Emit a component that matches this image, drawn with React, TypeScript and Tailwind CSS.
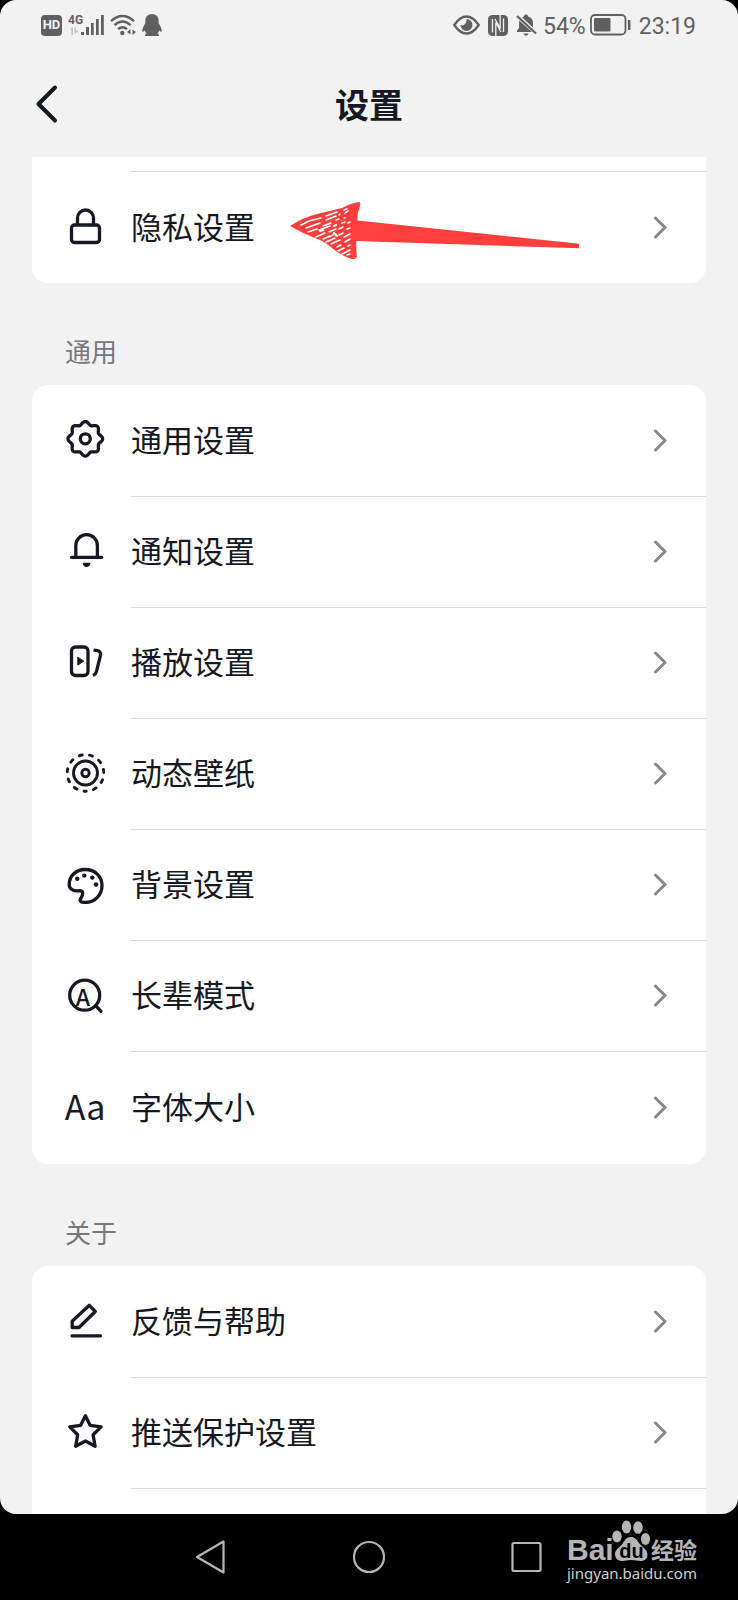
import React from 'react';

type IconProps = { children: React.ReactNode };

type Item = { label: string; icon: React.ReactNode; marked?: boolean };

// eight soft teeth around a circle
const gearPath = (() => {
  const points: string[] = [];
  for (let i = 0; i < 160; i++) {
    const angle = (i / 160) * Math.PI * 2;
    const radius = 15.8 + 1.5 * Math.cos(angle * 8);
    points.push(`${(20.3 + radius * Math.cos(angle)).toFixed(2)} ${(18.8 + radius * Math.sin(angle)).toFixed(2)}`);
  }
  return `M${points.join('L')}Z`;
})();

const Icon = ({ children }: IconProps) => (
  <svg
    viewBox="0 0 40 40"
    className="w-10 h-10"
    fill="none"
    stroke="currentColor"
    strokeWidth="3.3"
    strokeLinecap="round"
    strokeLinejoin="round"
    aria-hidden="true"
  >
    {children}
  </svg>
);

const LockIcon = () => (
  <Icon>
    <rect x="6.5" y="19" width="28" height="17.5" rx="3" />
    <path d="M12.5 18.5V12a8 8 0 0 1 16 0v6.5" />
  </Icon>
);

const GearIcon = () => (
  <Icon>
    <path d={gearPath} />
    <circle cx="20.3" cy="18.8" r="5" />
  </Icon>
);

const BellIcon = () => (
  <Icon>
    <path d="M6.5 26.3h30.3M10.8 26V14.5a10.8 10.8 0 0 1 21.6 0V26" />
    <path d="M17.7 31.8h7.8c0 2.6-1.7 4.2-3.9 4.2s-3.9-1.6-3.9-4.2z" fill="currentColor" stroke="none" />
  </Icon>
);

const PlayIcon = () => (
  <Icon>
    <rect x="6.5" y="5" width="16.5" height="28.5" rx="4" />
    <path d="M12.8 15.5v7.6l5.6-3.8z" fill="currentColor" strokeWidth="1" />
    <path d="M28.5 8l3.7.7c2.7.5 3.9 2.3 3.2 5L31.5 29.3c-.6 2.3-1.6 3.5-3.5 4.3" strokeLinecap="butt" />
  </Icon>
);

const WallpaperIcon = () => (
  <Icon>
    <g strokeWidth="2.9">
      <circle cx="20.5" cy="20" r="18.3" strokeDasharray="3 7.45" strokeDashoffset="1.5" transform="rotate(90 20.5 20)" />
      <circle cx="20.5" cy="20" r="12" />
      <circle cx="20.5" cy="20" r="3.7" />
    </g>
  </Icon>
);

const PaletteIcon = () => (
  <Icon>
    <path d="M4.2 20.5C4.2 12 11 5.5 20 5.5c10 0 17 7 17 16s-7 17-16.5 17c-5.5 0-6.3-2-4.500-4.500 2.500-4 2.500-7-1.500-7.300C8.500 27.500 4.200 25 4.200 20.500z" />
    <g fill="currentColor" stroke="none">
      <circle cx="12.3" cy="14.8" r="2.2" />
      <circle cx="19.3" cy="11.6" r="2.2" />
      <circle cx="27.3" cy="13.6" r="2.2" />
      <circle cx="31" cy="20.5" r="2.2" />
    </g>
  </Icon>
);

const ElderIcon = () => (
  <Icon>
    <circle cx="19.7" cy="20.2" r="15" />
    <path d="M31 31l5 5.3" />
    <text
      x="17.9"
      y="30.5"
      textAnchor="middle"
      fill="currentColor"
      stroke="none"
      className="text-[23px] font-medium font-['Noto_Sans_CJK_SC',sans-serif]"
    >
      A
    </text>
  </Icon>
);

const PencilIcon = () => (
  <Icon>
    <path d="M24.3 4.3l6 6.2L14 26.5H7.2v-6.3zM7 34.8h28.5" />
  </Icon>
);

const StarIcon = () => (
  <Icon>
    <path d="M20.4 3.8l4.7 9.5 11 1.6-8 7.8 2 11.6-9.7-5.3-9.7 5.3 2-11.6-8-7.800 11-1.600z" />
  </Icon>
);

const general: Item[] = [
  { label: '通用设置', icon: <GearIcon /> },
  { label: '通知设置', icon: <BellIcon /> },
  { label: '播放设置', icon: <PlayIcon /> },
  { label: '动态壁纸', icon: <WallpaperIcon /> },
  { label: '背景设置', icon: <PaletteIcon /> },
  { label: '长辈模式', icon: <ElderIcon /> },
  { label: '字体大小', icon: <span className="text-[34px] leading-10">Aa</span> },
];

const about: Item[] = [
  { label: '反馈与帮助', icon: <PencilIcon /> },
  { label: '推送保护设置', icon: <StarIcon /> },
];

const Arrow = () => (
  <svg viewBox="0 0 290 60" className="absolute left-[258px] top-7 w-[290px] h-[60px]" aria-hidden="true">
    <path
      d="M0 26Q14 17 27 14T52 8Q61 3 69 2Q71 2 70 6Q67 14 67.300 20.500L289 43.800V48.200L66.300 41Q66 50 67 57Q66 60 60 58.500Q50 55 42 48T25 38Q12 33 0 26z"
      fill="#ff3f3d"
    />
    <g stroke="#fff" strokeWidth="1.500" strokeLinecap="round" fill="none">
      <path d="M11 25l8-4 12-3M36 16l11-4M54 10l3-1M16 28l14-5M36 20l10-4M50 14l-1 1M18 32l9-3M33 26l8-3M46 20l3-1M55 13l3-2M29 30l11-4M54 18l1 0M26 37l9-4M39 32l7-3M52 23l3-1M33 39l10-4M49 29l4-2M58 23l2-1M36 42l9-4M49 35l4-2M57 29l3-1M41 44l9-4M54 37l6-3M47 47l4-2M55 42l5-3M48 51l6-3M58 46l2-1M52 54l8-4M57 55l3-1" />
      <path d="M30 31l3-1M44 26l2-1M44 33l3 3" strokeWidth="2.200" />
    </g>
  </svg>
);

const Row = ({ label, icon, marked, last }: Item & { last?: boolean }) => (
  <button type="button" className="relative flex w-full h-[111px] pl-[33px] gap-[26px] text-left cursor-pointer">
    <span className="flex items-center justify-center w-10 h-full pb-1">{icon}</span>
    <span className={`flex items-center justify-between flex-1 h-full pr-[34px] ${last ? '' : 'border-b border-[#dedede]'}`}>
      <span className="pb-1 text-[31px] leading-10">{label}</span>
      <svg viewBox="0 0 24 24" className="w-6 h-6 text-[#88888c]" fill="none" stroke="currentColor" strokeWidth="3" aria-hidden="true">
        <path d="M7.500 2l9.500 9.500L7.500 21" strokeLinecap="round" strokeLinejoin="round" />
      </svg>
    </span>
    {marked && <Arrow />}
  </button>
);

const SectionTitle = ({ children }: IconProps) => (
  <h2 className="h-[102px] pl-[33px] pt-12 text-[26px] leading-10 text-[#77777b]">{children}</h2>
);

const StatusBar = () => (
  <div className="flex items-center justify-between h-[50px] pl-[41px] pr-[42px] text-[#606060]">
    <div className="flex items-center gap-[6px]">
      <span className="flex items-center justify-center w-[21px] h-[21px] rounded bg-[#606060] text-[#f2f2f2] font-['Roboto',sans-serif] text-[13px] font-bold">
        HD
      </span>
      <svg viewBox="0 0 36 22" className="w-9 h-[22px]" fill="currentColor" aria-label="4G">
        <text x="0" y="10" className="text-xs font-bold font-['Roboto',sans-serif]">
          4G
        </text>
        <path d="M2 15.500l2-2h1V21H3.500v-6zM6.500 13.500H8v3h2v2H8l-1.500 2z" fill="#c4c4c4" />
        <path d="M13 18h3v3h-3zM18 13h3v8h-3zM23 9h2.700v12H23zM28 5h2.700v16H28zM33 1h2.800v20H33z" />
      </svg>
      <svg viewBox="0 0 26 22" className="w-[26px] h-[22px]" fill="none" stroke="currentColor" strokeWidth="2.400" aria-hidden="true">
        <path d="M1 7.200Q12.500-3 24 7.200M4.500 11.200Q12.500 4 20.500 11.200M8 15.200Q12.500 11.200 17 15.200" />
        <circle cx="12.300" cy="19" r="2.200" fill="currentColor" stroke="none" />
        <path d="M20.500 15v5.500l-3.500-2.500zM22.500 21v-5.500L26 18z" fill="currentColor" stroke="none" />
      </svg>
      <svg viewBox="0 0 20 22" className="w-5 h-[22px]" fill="currentColor" aria-hidden="true">
        <path d="M10 0c4.300 0 6.700 3 6.700 7v2.500c1.700 2.300 3 5 3 7.300 0 1.700-1 1.500-2.400-.5-.3 1.300-.9 2.300-1.800 3.200.8.400 1.400 1 1.400 2.500H3.100c0-1.500.6-2.100 1.400-2.500-.9-.9-1.500-1.900-1.800-3.200-1.400 2-2.400 2.200-2.400.5 0-2.300 1.300-5 3-7.300V7c0-4 2.400-7 6.700-7z" />
      </svg>
    </div>
    <div className="flex items-center gap-2 font-['Roboto',sans-serif] text-[23px] leading-7">
      <div className="flex items-center gap-[6px]">
        <div className="flex items-center gap-2">
          <svg viewBox="0 0 27 20" className="w-[27px] h-5" fill="none" stroke="currentColor" strokeWidth="2.300" aria-hidden="true">
            <path d="M1.300 10Q7 1.500 13.500 1.500T25.700 10Q20 18.500 13.500 18.500T1.300 10z" />
            <path d="M13.500 4a6 6 0 1 1-6 6c3 1.500 6.500-1.500 6-6z" fill="currentColor" stroke="none" />
          </svg>
          <svg viewBox="0 0 20 21" className="w-5 h-[21px]" aria-hidden="true">
            <rect width="20" height="21" rx="4.500" fill="currentColor" />
            <path d="M4.500 17.500V4M7.800 21V7.500l5.200 9.500M15.500 3.500V17M12.200 0v13.500L7 4" fill="none" stroke="#f2f2f2" strokeWidth="1.300" />
          </svg>
          <svg viewBox="0 0 21 22" className="w-[21px] h-[22px]" fill="currentColor" aria-hidden="true">
            <path d="M8 2.500C8 1 8.800.5 10 .5s2 .5 2 2c3.600.8 5 3.500 5 6.500v4.500L6 3.300zM3.200 6.500L16 18H1v-1.500l2-2.500zM7.500 19.500h5c-.3 1.500-1.200 2-2.500 2s-2.200-.5-2.500-2z" />
            <path d="M1 2l19 17.500" stroke="currentColor" strokeWidth="2.200" />
          </svg>
        </div>
        <div className="flex items-center gap-1">
          <span className="pt-[3px]">54%</span>
          <svg viewBox="0 0 41 22" className="w-[41px] h-[22px]" fill="none" stroke="currentColor" strokeWidth="1.800" aria-hidden="true">
            <rect x="1" y="1" width="34.500" height="19.500" rx="4" />
            <rect x="4" y="4" width="16.500" height="13.500" rx="1" fill="currentColor" stroke="none" />
            <path d="M39.200 6v10" strokeWidth="2.500" />
          </svg>
        </div>
      </div>
      <span className="pt-[3px]">23:19</span>
    </div>
  </div>
);

const Watermark = () => (
  <div className="absolute right-[39px] top-[15px] w-[132px] text-[#b5b5b5]">
    <div className="flex items-end h-9">
      <span className="w-11 font-['Liberation_Sans',sans-serif] text-[30px] leading-[30px] font-bold">Bai</span>
      <svg viewBox="0 2 38 44" className="w-10 h-11 overflow-visible shrink-0" fill="currentColor" aria-hidden="true">
        <ellipse cx="5" cy="17.500" rx="4.700" ry="6" />
        <ellipse cx="14.500" cy="8" rx="4.700" ry="6.500" />
        <ellipse cx="26" cy="8.500" rx="4.700" ry="6.300" />
        <ellipse cx="33.500" cy="20" rx="4.600" ry="6" />
        <path d="M19 18c4 0 5.500 2.500 8 6s8.500 6.500 8.500 11.500c0 4.500-3 6.500-7 6.500-3 0-5.500-1-9.500-1s-5.500 1-8.500 1c-4.500 0-7.500-2.500-7.500-7 0-5 5.500-7 8-11s4-6 8-6z" />
        <text x="19.500" y="38.500" textAnchor="middle" fill="#000" className="text-[20px] font-bold font-['Liberation_Sans',sans-serif]">
          du
        </text>
      </svg>
      <span className="pb-1 text-[23px] leading-6 font-bold whitespace-nowrap">经验</span>
    </div>
    <p className="font-['Noto_Sans',sans-serif] text-[15px] leading-4 text-[#d0d0d0]">jingyan.baidu.com</p>
  </div>
);

export default function App() {
  return (
    <div className="min-h-screen bg-black text-[#161823] font-['Noto_Sans_CJK_SC',sans-serif]">
      <div className="overflow-hidden rounded-2xl bg-[#f2f2f2]">
        <StatusBar />
        <header className="grid items-center h-[107px] grid-cols-[48px_1fr_48px] px-[23px]">
          <button type="button" aria-label="返回" className="flex justify-center cursor-pointer">
            <svg viewBox="0 0 24 40" className="w-6 h-10" fill="none" stroke="currentColor" strokeWidth="4" aria-hidden="true">
              <path d="M20 3.500L3.500 20 20 36.500" strokeLinecap="round" strokeLinejoin="round" />
            </svg>
          </button>
          <h1 className="text-center text-[34px] leading-10 font-bold">设置</h1>
        </header>
        <main className="px-8">
          <section className="bg-white rounded-b-2xl">
            <div className="ml-[99px] h-[15px] border-b border-[#dedede]" />
            <Row label="隐私设置" icon={<LockIcon />} marked last />
          </section>
          <SectionTitle>通用</SectionTitle>
          <section className="py-px bg-white rounded-2xl">
            {general.map((item, i) => (
              <Row key={item.label} {...item} last={i === general.length - 1} />
            ))}
          </section>
          <SectionTitle>关于</SectionTitle>
          <section className="pt-px pb-[25px] bg-white rounded-t-2xl">
            {about.map((item) => (
              <Row key={item.label} {...item} />
            ))}
          </section>
        </main>
      </div>
      <nav className="relative flex items-center justify-center gap-[126px] h-[86px] text-[#b5b5b5]">
        <button type="button" aria-label="后退" className="cursor-pointer">
          <svg viewBox="0 0 32 34" className="w-8 h-[34px]" fill="none" stroke="currentColor" strokeWidth="2.200" strokeLinejoin="round">
            <path d="M28.500 1.500v31L2 17z" />
          </svg>
        </button>
        <button type="button" aria-label="主页" className="cursor-pointer">
          <svg viewBox="0 0 32 34" className="w-8 h-[34px]" fill="none" stroke="currentColor" strokeWidth="2.200">
            <circle cx="16" cy="17" r="15" />
          </svg>
        </button>
        <button type="button" aria-label="最近任务" className="cursor-pointer">
          <svg viewBox="0 0 32 34" className="w-8 h-[34px]" fill="none" stroke="currentColor" strokeWidth="2.200">
            <rect x="1.500" y="3" width="28" height="28" rx="1.500" />
          </svg>
        </button>
        <Watermark />
      </nav>
    </div>
  );
}
